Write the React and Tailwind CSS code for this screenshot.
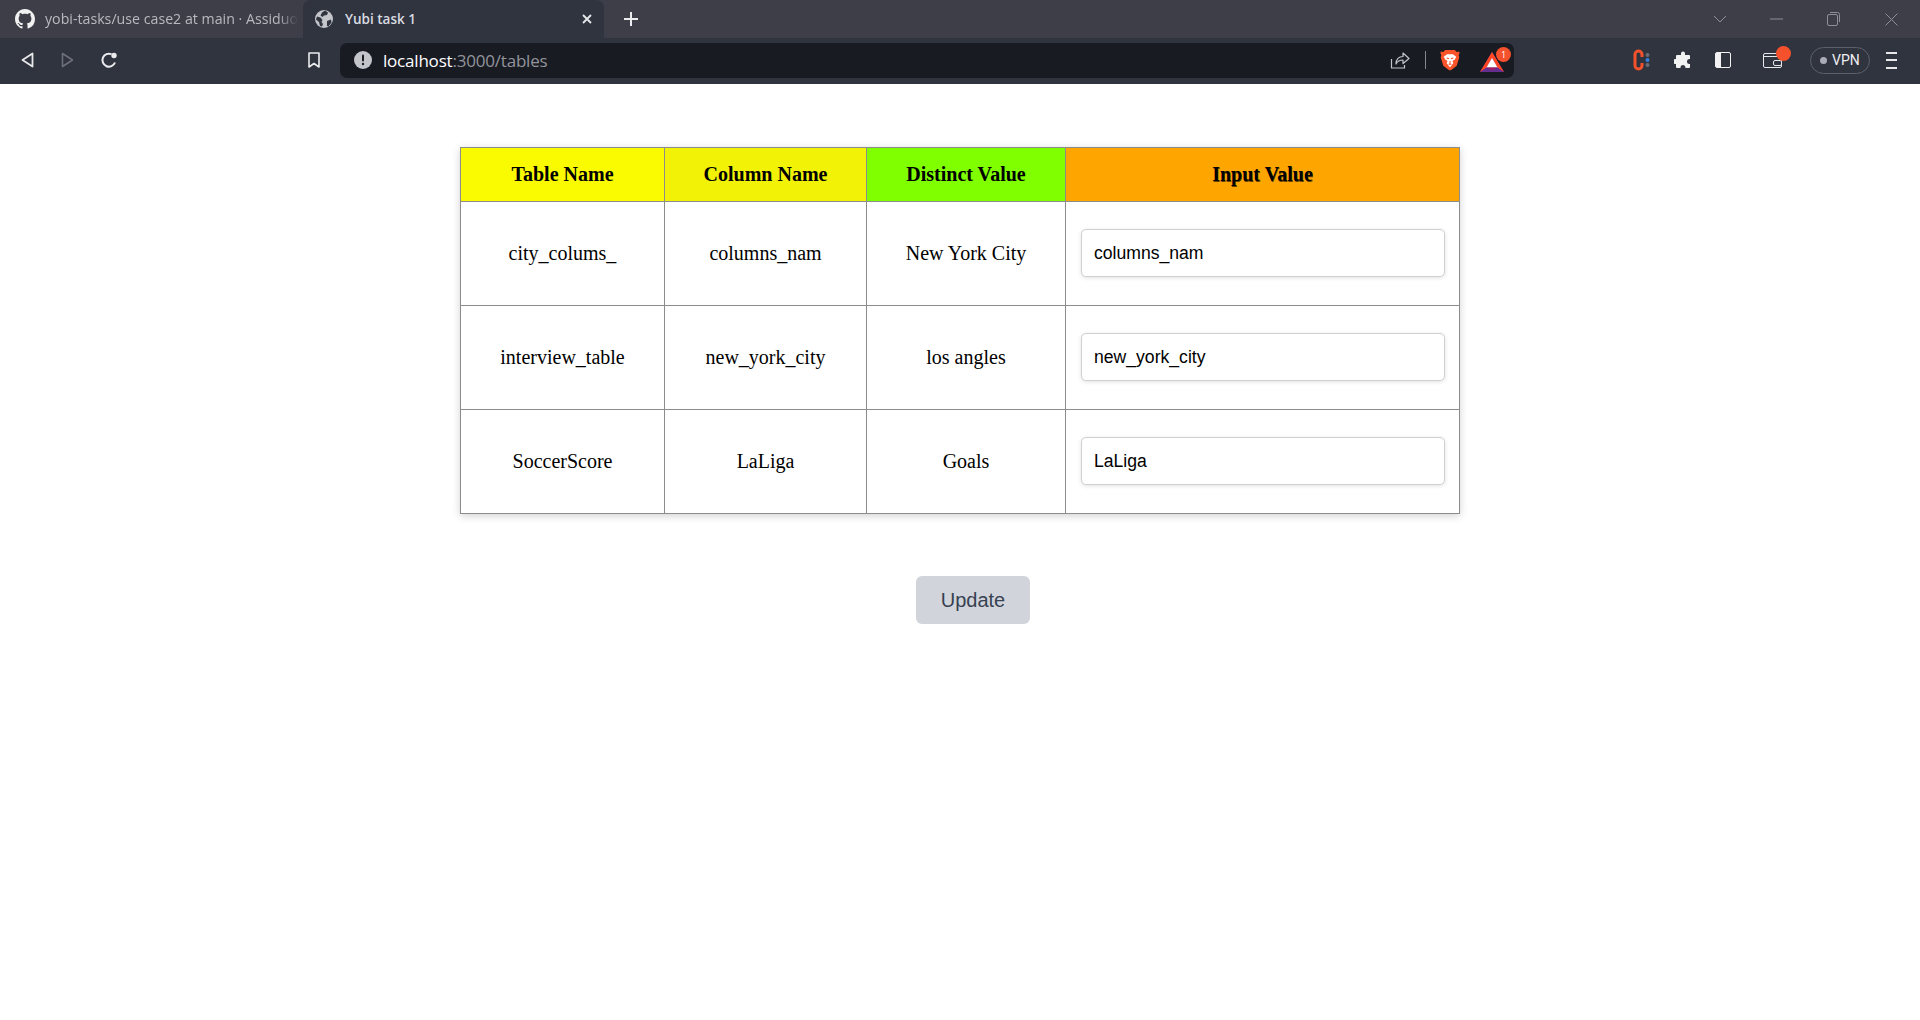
import React from "react";

function GitHubIcon() {
  return (
    <svg width="20" height="20" viewBox="0 0 16 16" fill="#f1f1f1" className="shrink-0">
      <path d="M8 0C3.58 0 0 3.58 0 8c0 3.54 2.29 6.53 5.47 7.59.4.07.55-.17.55-.38 0-.19-.01-.82-.01-1.49-2.01.37-2.53-.49-2.69-.94-.09-.23-.48-.94-.82-1.13-.28-.15-.68-.52-.01-.53.63-.01 1.08.58 1.23.82.72 1.21 1.87.87 2.33.66.07-.52.28-.87.51-1.07-1.78-.2-3.64-.89-3.64-3.95 0-.87.31-1.59.82-2.15-.08-.2-.36-1.02.08-2.12 0 0 .67-.21 2.2.82.64-.18 1.32-.27 2-.27s1.36.09 2 .27c1.53-1.04 2.2-.82 2.2-.82.44 1.1.16 1.92.08 2.12.51.56.82 1.27.82 2.15 0 3.07-1.87 3.75-3.65 3.95.29.25.54.73.54 1.48 0 1.07-.01 1.93-.01 2.2 0 .21.15.46.55.38A8.01 8.01 0 0 0 16 8c0-4.42-3.58-8-8-8z" />
    </svg>
  );
}

function GlobeIcon() {
  return (
    <svg width="18" height="18" viewBox="0 0 18 18" className="shrink-0">
      <circle cx="9" cy="9" r="9" fill="#c3c5cb" />
      <path d="M2 6.500l3.500 1 2 2.500-1 2 1.500 2-1 2.500-2-.5-1-4-3-2.500zM10 .5l3 2-1 2.500-3 .5-1.500 1.500-2-1.500L7 2.500zM12 11l4-1.500.5 3-3 4-1.500-.5z" fill="#30343f" />
    </svg>
  );
}

function BraveIcon() {
  return (
    <svg width="20" height="23" viewBox="0 0 20 24" className="shrink-0">
      <path d="M5 1h10l2 2 2.500-.5.5 2-1 2 .7 2-2.700 9-5 4-2 1-2-1-5-4-2.700-9 .7-2-1-2 .5-2L3 3z" fill="#fb542b" />
      <path d="M3.500 8l3.500-2.500h6L16.500 8l-1.500 3-2.500 1.500 1 2-2.500 3.500-1 1-1-1-2.500-3.500 1-2L5 11z" fill="#fff" />
      <path d="M6.500 9.500l2.500.8M13.500 9.500l-2.500.8M10 12.500v3M8.500 16h3" stroke="#fb542b" strokeWidth="1.100" fill="none" />
    </svg>
  );
}

function BatIcon() {
  return (
    <svg width="24" height="20" viewBox="0 0 24 20" className="shrink-0">
      <path d="M12 0 L24 20 L0 20 Z" fill="#662d91" />
      <path d="M12 0 L24 20 L17.500 15.500 L12 6 L6.500 15.500 L0 20 Z" fill="#ff4724" />
      <path d="M12 6 L17.500 15.500 L6.500 15.500 Z" fill="#fff" />
      <path d="M6.500 15.500 L17.500 15.500 L12 18.500 Z" fill="#9e1f63" />
    </svg>
  );
}

const Row = ({ table, column, distinct, value }) => (
  <tr className="h-[104px]">
    <td className="border border-[#8c8c8c] text-center">{table}</td>
    <td className="border border-[#8c8c8c] text-center">{column}</td>
    <td className="border border-[#8c8c8c] text-center">{distinct}</td>
    <td className="border border-[#8c8c8c] pb-[2px] pl-[15px] pr-[14px]">
      <input
        readOnly
        value={value}
        className="block h-12 w-full rounded-[5px] border border-[#d0d0d0] bg-white px-3 pt-[2px] font-['Liberation_Sans',Arial,sans-serif] text-[17.6px] text-black shadow-[0_1px_4px_rgba(0,0,0,0.12)] outline-none"
      />
    </td>
  </tr>
);

export default function App() {
  return (
    <div className="min-h-[1020px] bg-white font-['Liberation_Serif',serif]">
      {/* Browser chrome */}
      <div className="font-['Open_Sans',sans-serif]">
        <div className="flex h-[38px] items-stretch bg-[#3d3e48]">
          <div className="flex w-[305px] items-center pl-[15px]">
            <GitHubIcon />
            <span className="ml-[10px] w-[253px] overflow-hidden whitespace-nowrap text-[14.200px] leading-[20px] text-[#b9bac0] [mask-image:linear-gradient(to_right,black_92%,transparent)]">
              yobi-tasks/use case2 at main · Assiduous
            </span>
          </div>
          <div className="ml-[-2px] flex h-[38px] w-[301px] items-center rounded-t-[8px] bg-[#30343f] pl-[12px] pr-[11px]">
            <GlobeIcon />
            <span className="ml-[12px] flex-1 pt-[1px] text-[13.500px] font-semibold leading-none text-[#d9dbe2]">Yubi task 1</span>
            <svg width="12" height="12" viewBox="0 0 12 12" stroke="#e8e8ea" strokeWidth="1.800">
              <path d="M2 2l8 8M10 2l-8 8" />
            </svg>
          </div>
          <div className="ml-[19px] flex items-center">
            <svg width="16" height="16" viewBox="0 0 16 16" stroke="#ececef" strokeWidth="2">
              <path d="M8 1v14M1 8h14" />
            </svg>
          </div>
          <div className="ml-auto flex items-center text-[#8e8f97]">
            <svg width="14" height="8" viewBox="0 0 14 8" fill="none" stroke="currentColor" strokeWidth="1">
              <path d="M1 1l6 6 6-6" />
            </svg>
            <svg className="ml-[43px]" width="13" height="2" viewBox="0 0 13 2" stroke="currentColor" strokeWidth="1">
              <path d="M0 1h13" />
            </svg>
            <svg className="ml-[44px]" width="13" height="14" viewBox="0 0 13 14" fill="none" stroke="currentColor" strokeWidth="1">
              <rect x="0.500" y="2.500" width="10" height="11" rx="1.500" />
              <path d="M3 .5h7.500a2 2 0 0 1 2 2V10" />
            </svg>
            <svg className="ml-[45px] mr-[22px]" width="13" height="13" viewBox="0 0 13 13" stroke="currentColor" strokeWidth="1">
              <path d="M.5.5l12 12M12.500.5l-12 12" />
            </svg>
          </div>
        </div>

        <div className="flex h-[46px] items-center bg-[#30343f] pb-[2px]">
          <svg className="ml-[21px]" width="13" height="16" viewBox="0 0 13 16" fill="none" stroke="#e8e8ea" strokeWidth="1.800" strokeLinejoin="round">
            <path d="M11.500 1.500v13L1.500 8z" />
          </svg>
          <svg className="ml-[27px]" width="13" height="16" viewBox="0 0 13 16" fill="none" stroke="#6d707a" strokeWidth="1.500" strokeLinejoin="round">
            <path d="M1.500 1.500v13L11.500 8z" />
          </svg>
          <svg className="ml-[26px]" width="18" height="18" viewBox="0 0 18 18" fill="none" stroke="#ececef" strokeWidth="2">
            <path d="M15 11.500A6.500 6.500 0 1 1 11.500 3.200" />
            <circle cx="14" cy="4.500" r="2.700" fill="#ececef" stroke="none" />
          </svg>
          <svg className="ml-[190px]" width="12" height="16" viewBox="0 0 12 16" fill="none" stroke="#ececef" strokeWidth="1.600" strokeLinejoin="round">
            <path d="M1 1h10v14l-5-3.500L1 15z" />
          </svg>
          <div className="ml-[20px] flex h-[35px] w-[1174px] items-center rounded-[7px] bg-[#191b23] pl-[14px]">
            <svg width="18" height="18" viewBox="0 0 18 18" className="shrink-0">
              <circle cx="9" cy="9" r="9" fill="#c3c5cb" />
              <rect x="8" y="3.500" width="2" height="7" rx="1" fill="#191b23" />
              <circle cx="9" cy="13" r="1.200" fill="#191b23" />
            </svg>
            <span className="ml-[11px] mt-[1px] text-[17px] tracking-[-0.2px] text-white">
              localhost<span className="text-[#92949b]">:3000/tables</span>
            </span>
            <div className="ml-auto flex items-center">
              <svg width="20" height="20" viewBox="0 0 20 20" fill="none" stroke="#c3c5cb" strokeWidth="1.200" strokeLinejoin="round">
                <path d="M1.500 9v9h13v-3" />
                <path d="M6 14c0-5 3-7.500 7-7.500V3l6 5.500-6 5V10c-3 0-5.500 1-7 4z" />
              </svg>
              <div className="ml-[15px] h-[18px] w-px bg-[#85878e]" />
              <div className="ml-[14px]"><BraveIcon /></div>
              <div className="relative ml-[20px] mr-[10px] pt-[3px]">
                <BatIcon />
                <div className="absolute -right-[7px] -top-[2px] flex h-[15px] w-[15px] items-center justify-center rounded-full bg-[#f4512c] text-[9px] leading-none text-white">1</div>
              </div>
            </div>
          </div>
          <svg className="ml-[118px]" width="20" height="24" viewBox="0 0 20 24" fill="none">
            <path d="M10 9V6.500a3.500 3.500 0 0 0-7 0v11a3.500 3.500 0 0 0 7 0V15" stroke="#f4512c" strokeWidth="3" />
            <circle cx="15.500" cy="7" r="2" fill="#6b6d75" />
            <circle cx="15.500" cy="12" r="2" fill="#2f7fe0" />
            <circle cx="15.500" cy="17" r="2" fill="#6b6d75" />
          </svg>
          <svg className="ml-[22px]" width="18" height="18" viewBox="0 0 18 18" fill="#f2f2f3">
            <path d="M7 2.500a2 2 0 0 1 4 0V4h4a1 1 0 0 1 1 1v3h-.5a2.500 2.500 0 0 0 0 5h.5v3a1 1 0 0 1-1 1h-3.500v-.5a2.500 2.500 0 0 0-5 0v.5H3a1 1 0 0 1-1-1v-3h-.5a2.500 2.500 0 0 1 0-5H2V5a1 1 0 0 1 1-1h4z" />
          </svg>
          <div className="ml-[23px] flex h-[16px] w-[16px] rounded-[2px] border-[1.500px] border-[#f2f2f3]">
            <div className="w-[5px] bg-[#f2f2f3]" />
          </div>
          <div className="relative ml-[32px] h-[15px] w-[19px] rounded-[2px] border-[1.500px] border-[#e8e8ea]">
            <div className="mt-[2px] h-[1.500px] w-full bg-[#e8e8ea]" />
            <div className="absolute bottom-[1px] right-[-1px] h-[6px] w-[9px] rounded-[2px] border-[1.500px] border-[#e8e8ea] bg-[#30343f]" />
            <div className="absolute -right-[10px] -top-[8px] h-[15px] w-[15px] rounded-full bg-[#f4512c]" />
          </div>
          <div className="ml-[28px] flex h-[27px] w-[60px] items-center rounded-full border border-[#5d606c] pl-[9px]">
            <div className="h-[7px] w-[7px] rounded-full bg-[#a9abb8]" />
            <span className="ml-[5px] font-['Roboto',sans-serif] text-[14px] leading-none text-[#eeeef2]">VPN</span>
          </div>
          <div className="ml-[16px] flex w-[11px] flex-col gap-[5.500px]">
            <div className="h-[2px] bg-[#e8e8ea]" />
            <div className="h-[2px] bg-[#e8e8ea]" />
            <div className="h-[2px] bg-[#e8e8ea]" />
          </div>
        </div>
      </div>

      {/* Page */}
      <div className="flex flex-col items-center pt-[63px]">
        <table className="w-[999px] table-fixed border-collapse text-[20px] leading-[23px] text-black shadow-[0_2px_8px_rgba(0,0,0,0.18)]">
          <colgroup>
            <col className="w-[204px]" />
            <col className="w-[202px]" />
            <col className="w-[199px]" />
            <col className="w-[394px]" />
          </colgroup>
          <thead>
            <tr className="h-[54px] font-bold">
              <th className="border border-[#8c8c8c] bg-[#fafa00]">Table Name</th>
              <th className="border border-[#8c8c8c] bg-[#f2f206]">Column Name</th>
              <th className="border border-[#8c8c8c] bg-[#7fff00]">Distinct Value</th>
              <th className="border border-[#8c8c8c] bg-[#ffa500] [text-shadow:0.5px_0.5px_0.5px_rgba(0,0,0,0.6)]">Input Value</th>
            </tr>
          </thead>
          <tbody>
            <Row table="city_colums_" column="columns_nam" distinct="New York City" value="columns_nam" />
            <Row table="interview_table" column="new_york_city" distinct="los angles" value="new_york_city" />
            <Row table="SoccerScore" column="LaLiga" distinct="Goals" value="LaLiga" />
          </tbody>
        </table>
        <button className="ml-[26px] mt-[62px] h-12 w-[114px] rounded-md bg-[#d1d5db] font-['Liberation_Sans',Arial,sans-serif] text-[20px] text-[#374151]">
          Update
        </button>
      </div>
    </div>
  );
}
